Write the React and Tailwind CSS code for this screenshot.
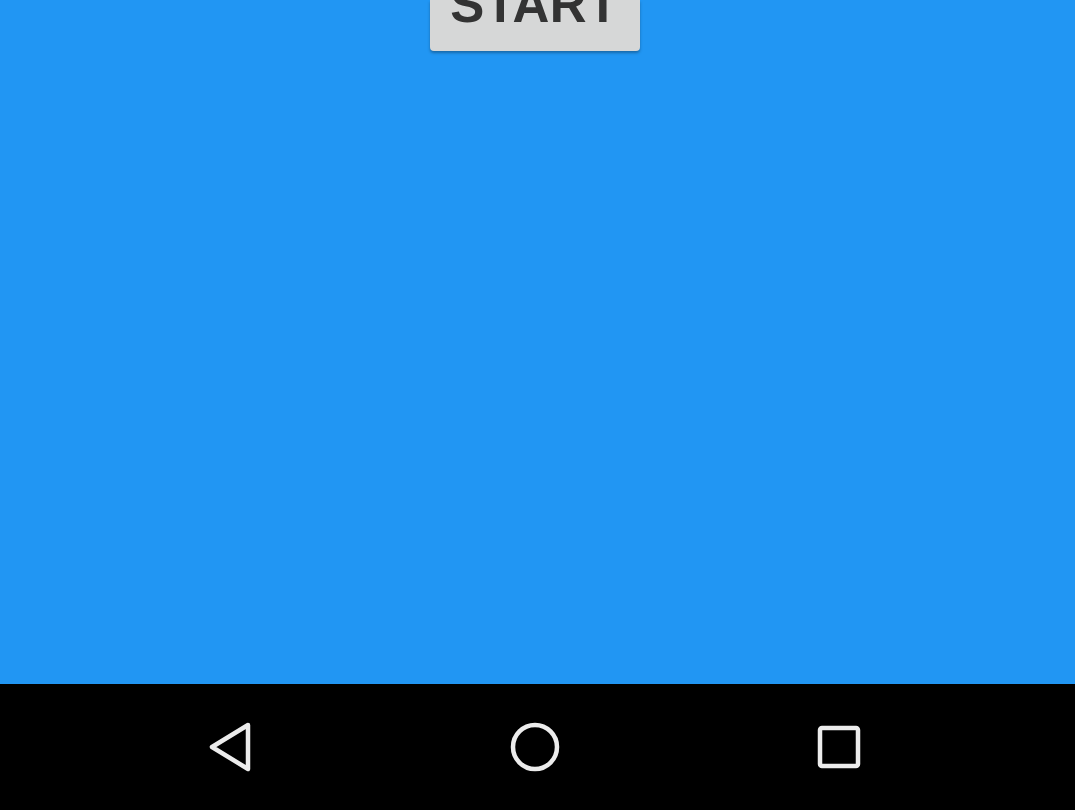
import React from 'react';

export default function App() {
  return (
    <div className="w-[1075px] h-[810px] flex flex-col overflow-hidden bg-[#2196f3] font-['Liberation_Sans',Arial,sans-serif]">
      {/* content area, button sits partly scrolled off the top */}
      <div className="flex-1 flex justify-center pr-[6px]">
        <button className="w-[210px] h-[51px] flex items-end justify-center pb-[21px] rounded-b-[4px] bg-[#d6d7d7] shadow-[0_2px_3px_rgba(0,0,0,0.3)]">
          <span className="text-[51px] leading-none font-bold tracking-[0.5px] text-[#333333]">START</span>
        </button>
      </div>

      {/* navigation bar */}
      <div className="h-[126px] bg-black flex items-center justify-center pr-[6px]">
        <div className="w-[304px] flex justify-center">
          <svg width="46" height="50" viewBox="0 0 46 50">
            <path d="M40 3 L4 25 L40 47 Z" fill="none" stroke="#ececec" strokeWidth="4.5" strokeLinejoin="round" />
          </svg>
        </div>
        <div className="w-[304px] flex justify-center">
          <svg width="52" height="52" viewBox="0 0 52 52">
            <circle cx="26" cy="26" r="22" fill="none" stroke="#ececec" strokeWidth="4.5" />
          </svg>
        </div>
        <div className="w-[304px] flex justify-center">
          <svg width="46" height="46" viewBox="0 0 46 46">
            <rect x="4" y="4" width="38" height="38" rx="2" fill="none" stroke="#ececec" strokeWidth="4.5" />
          </svg>
        </div>
      </div>
    </div>
  );
}
